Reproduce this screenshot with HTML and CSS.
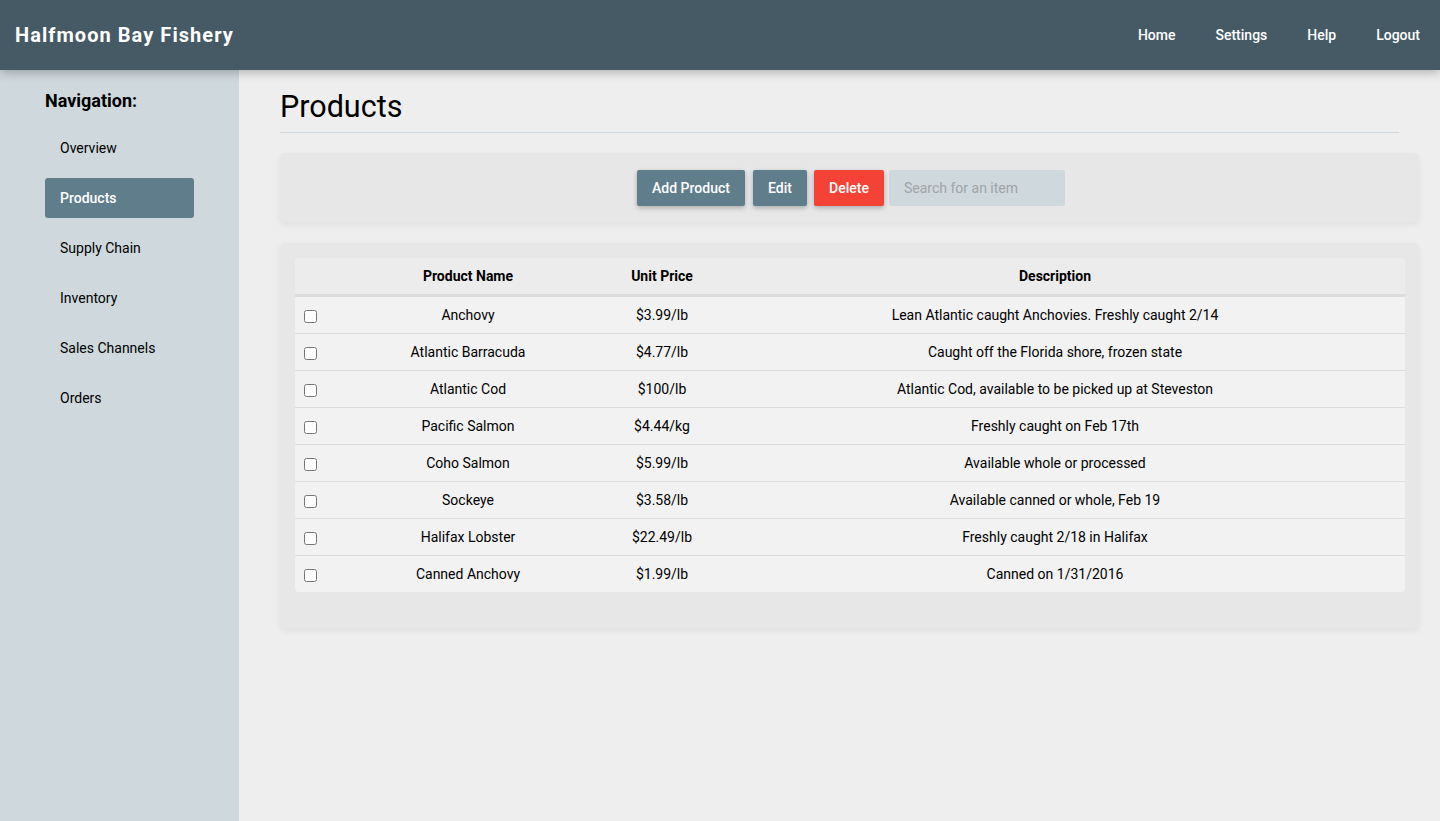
FILE: index.html
```html
<!DOCTYPE html>
<html lang="en">
<head>
<meta charset="utf-8">
<title>Halfmoon Bay Fishery - Products</title>
<link rel="stylesheet" href="styles.css">
</head>
<body>
<header class="topbar">
  <div class="brand">Halfmoon Bay Fishery</div>
  <nav class="toplinks">
    <a href="#">Home</a>
    <a href="#">Settings</a>
    <a href="#">Help</a>
    <a href="#">Logout</a>
  </nav>
</header>
<div class="layout">
  <aside class="sidebar">
    <h2 class="nav-title">Navigation:</h2>
    <ul class="nav-list">
      <li class="nav-item">Overview</li>
      <li class="nav-item active">Products</li>
      <li class="nav-item">Supply Chain</li>
      <li class="nav-item">Inventory</li>
      <li class="nav-item">Sales Channels</li>
      <li class="nav-item">Orders</li>
    </ul>
  </aside>
  <main class="content">
    <h1 class="page-title">Products</h1>
    <hr class="divider">
    <section class="panel toolbar">
      <button class="btn btn-primary btn-add">Add Product</button>
      <button class="btn btn-primary btn-edit">Edit</button>
      <button class="btn btn-danger btn-delete">Delete</button>
      <input class="search" type="text" placeholder="Search for an item">
    </section>
    <section class="panel table-panel">
      <table class="products">
        <thead>
          <tr>
            <th class="col-check"></th>
            <th class="col-name">Product Name</th>
            <th class="col-price">Unit Price</th>
            <th class="col-desc">Description</th>
            <th class="col-end"></th>
          </tr>
        </thead>
        <tbody>
          <tr><td class="col-check"><input type="checkbox"></td><td>Anchovy</td><td>$3.99/lb</td><td>Lean Atlantic caught Anchovies. Freshly caught 2/14</td><td></td></tr>
          <tr><td class="col-check"><input type="checkbox"></td><td>Atlantic Barracuda</td><td>$4.77/lb</td><td>Caught off the Florida shore, frozen state</td><td></td></tr>
          <tr><td class="col-check"><input type="checkbox"></td><td>Atlantic Cod</td><td>$100/lb</td><td>Atlantic Cod, available to be picked up at Steveston</td><td></td></tr>
          <tr><td class="col-check"><input type="checkbox"></td><td>Pacific Salmon</td><td>$4.44/kg</td><td>Freshly caught on Feb 17th</td><td></td></tr>
          <tr><td class="col-check"><input type="checkbox"></td><td>Coho Salmon</td><td>$5.99/lb</td><td>Available whole or processed</td><td></td></tr>
          <tr><td class="col-check"><input type="checkbox"></td><td>Sockeye</td><td>$3.58/lb</td><td>Available canned or whole, Feb 19</td><td></td></tr>
          <tr><td class="col-check"><input type="checkbox"></td><td>Halifax Lobster</td><td>$22.49/lb</td><td>Freshly caught 2/18 in Halifax</td><td></td></tr>
          <tr><td class="col-check"><input type="checkbox"></td><td>Canned Anchovy</td><td>$1.99/lb</td><td>Canned on 1/31/2016</td><td></td></tr>
        </tbody>
      </table>
    </section>
  </main>
</div>
</body>
</html>
```

FILE: styles.css
```css
* { box-sizing: border-box; }

html, body {
  margin: 0;
  padding: 0;
  height: 100%;
}

body {
  font-family: Roboto, "Liberation Sans", Arial, sans-serif;
  font-size: 14px;
  color: #000;
  background: #eeeeee;
}

.topbar {
  position: relative;
  z-index: 2;
  height: 70px;
  background: #465a65;
  display: flex;
  align-items: center;
  justify-content: space-between;
  padding: 0 0 0 15px;
  box-shadow: 0 2px 10px rgba(0, 0, 0, 0.28);
}

.brand {
  color: #ffffff;
  font-size: 20px;
  font-weight: 700;
  letter-spacing: 1.05px;
}

.toplinks {
  display: flex;
  height: 100%;
  align-items: center;
}

.toplinks a {
  color: #ffffff;
  text-decoration: none;
  font-size: 14px;
  font-weight: 500;
  padding: 0 20px;
}

.layout {
  display: flex;
  min-height: calc(100vh - 70px);
}

.sidebar {
  width: 239px;
  flex: 0 0 239px;
  background: #cfd8dc;
  padding: 20px 0 0 45px;
}

.nav-title {
  margin: 0;
  font-size: 18px;
  font-weight: 700;
  line-height: 22px;
}

.nav-list {
  list-style: none;
  margin: 16px 0 0;
  padding: 0;
}

.nav-item {
  width: 149px;
  height: 40px;
  line-height: 40px;
  padding-left: 15px;
  margin-bottom: 10px;
  border-radius: 3px;
  color: #000;
}

.nav-item.active {
  background: #607d8b;
  color: #ffffff;
  font-weight: 500;
}

.content {
  flex: 1;
  padding: 0 21px 0 41px;
}

.page-title {
  margin: 19px 0 0;
  font-size: 30.5px;
  font-weight: 400;
  line-height: 36px;
}

.divider {
  margin: 7px 20px 20px 0;
  border: 0;
  border-top: 1px solid #cfd8dc;
  height: 0;
}

.panel {
  background: #e7e7e7;
  border-radius: 4px;
  box-shadow: 0 3px 6px rgba(0, 0, 0, 0.06);
}

.toolbar {
  display: flex;
  justify-content: center;
  align-items: center;
  padding: 17px 0 16px 3px;
}

.btn {
  height: 36px;
  border: 0;
  border-radius: 2px;
  color: #ffffff;
  font-family: inherit;
  font-size: 14px;
  font-weight: 500;
  padding: 0;
  text-align: center;
  box-shadow: 0 2px 5px rgba(0, 0, 0, 0.26);
}

.btn-primary { background: #607d8b; }
.btn-danger { background: #f44336; }

.btn-add { width: 108px; margin-right: 8px; }
.btn-edit { width: 54px; margin-right: 7px; }
.btn-delete { width: 70px; margin-right: 5px; }

.search {
  width: 176px;
  height: 36px;
  border: 0;
  border-radius: 2px;
  background: #cfd8dc;
  padding: 0 15px;
  font-family: inherit;
  font-size: 14px;
  color: #333;
  outline: none;
}

.search::placeholder { color: #a0a4a6; }

.table-panel {
  margin-top: 21px;
  padding: 15px 14px 36px 15px;
}

.products {
  width: 100%;
  border-collapse: separate;
  border-spacing: 0;
  background: #f2f2f2;
  border-radius: 4px;
  overflow: hidden;
  table-layout: fixed;
}

.products th {
  background: #ececec;
  height: 39px;
  font-weight: 700;
  text-align: center;
  border-bottom: 3px solid #dcdcdc;
  padding: 0;
}

.products td {
  height: 37px;
  text-align: center;
  border-bottom: 1px solid #dcdcdc;
  padding: 0;
}

.products tbody tr:last-child td {
  border-bottom: 0;
  height: 36px;
}

.products thead tr th:first-child { border-top-left-radius: 4px; }
.products thead tr th:last-child { border-top-right-radius: 4px; }

.col-check { width: 52px; text-align: left !important; padding-left: 5px !important; }
.col-name { width: 242px; }
.col-price { width: 146px; }
.col-end { width: 30px; }

.col-check input {
  margin: 3px 3px 0 4px;
  vertical-align: -3px;
}
```
